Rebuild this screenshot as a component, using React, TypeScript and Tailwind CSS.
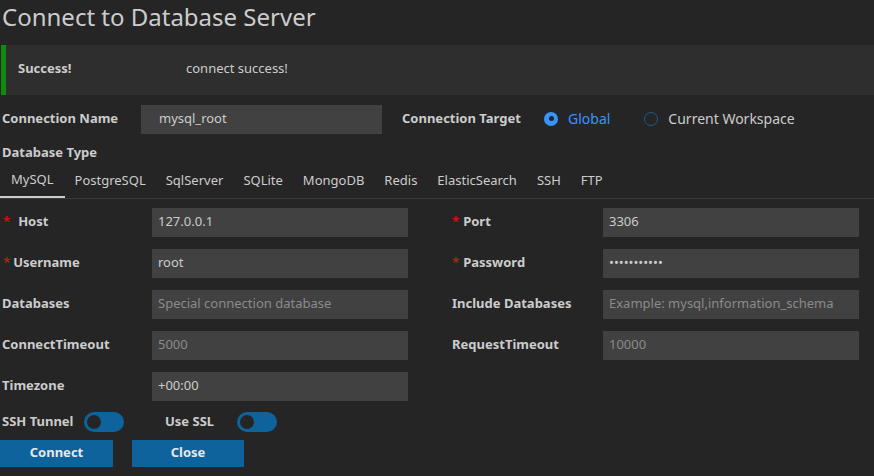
import React from 'react'

const tabs = ['MySQL', 'PostgreSQL', 'SqlServer', 'SQLite', 'MongoDB', 'Redis', 'ElasticSearch', 'SSH', 'FTP']

function Label({ text, required, gap = 'ml-[8px]' }: { text: string; required?: boolean; gap?: string }) {
  return (
    <span className="block pb-[1px] font-bold text-[13px] text-[#cccccc] whitespace-nowrap">
      {required && <span className="text-[#e51400] font-normal">*</span>}
      <span className={required ? gap : ''}>{text}</span>
    </span>
  )
}

function Field({ value, placeholder }: { value?: string; placeholder?: boolean }) {
  return (
    <div
      className={
        'h-[29px] w-[256px] bg-[#414141] px-[6px] pb-[2px] flex items-center text-[13px] ' +
        (placeholder ? 'text-[#8b8b8b]' : 'text-[#cccccc]')
      }
    >
      {value}
    </div>
  )
}

function Toggle() {
  return (
    <div className="w-[40px] h-[20px] rounded-full bg-[#0e639c] flex items-center px-[3px]">
      <div className="w-[14px] h-[14px] rounded-full bg-[#252526]" />
    </div>
  )
}

export default function App() {
  return (
    <div
      className="w-[874px] h-[476px] bg-[#252526] text-[#cccccc] overflow-hidden"
      style={{ fontFamily: '"Noto Sans", "Open Sans", sans-serif' }}
    >
      <h1 className="text-[24px] leading-[33px] pl-[2px] text-[#cccccc]">Connect to Database Server</h1>

      {/* alert */}
      <div className="mt-[12px] h-[50px] bg-[#2e2e2e] border-l-[5px] border-[#108b10] ml-[1px] flex items-center text-[13px] pb-[2px]">
        <span className="font-bold w-[180px] pl-[12px]">Success!</span>
        <span>connect success!</span>
      </div>

      {/* connection name / target */}
      <div className="mt-[10px] flex items-center h-[29px]">
        <div className="w-[141px] pl-[2px]">
          <Label text="Connection Name" />
        </div>
        <div className="h-[29px] w-[241px] bg-[#414141] pl-[18px] pb-[2px] flex items-center text-[13px]">mysql_root</div>
        <div className="ml-[20px] w-[142px]">
          <Label text="Connection Target" />
        </div>
        <div className="flex items-center gap-[10px] text-[14px] text-[#3794ff] pb-[2px]">
          <span className="w-[14px] h-[14px] rounded-full bg-[#3794ff] flex items-center justify-center">
            <span className="w-[5px] h-[5px] rounded-full bg-[#252526]" />
          </span>
          Global
        </div>
        <div className="ml-[34px] flex items-center gap-[10px] text-[14px] pb-[2px]">
          <span className="w-[14px] h-[14px] rounded-full border border-[#1d5a8a]" />
          Current Workspace
        </div>
      </div>

      <div className="mt-[10px] pl-[2px] h-[18px] flex items-center">
        <Label text="Database Type" />
      </div>

      {/* tabs */}
      <div className="mt-[4px] flex border-b border-[#3b3b3b] text-[13px]">
        {tabs.map((t, i) => (
          <div
            key={t}
            className={
              'h-[32px] flex items-center px-[10px] pb-[3px] ' +
              (i === 0 ? 'border-b-2 border-[#cccccc] -mb-[1px] pl-[11px] pr-[11px]' : '')
            }
          >
            {t}
          </div>
        ))}
      </div>

      {/* form */}
      <div className="mt-[9px] grid grid-cols-[152px_256px_44px_151px_256px] gap-y-[12px] items-center">
        <div className="pl-[3px]"><Label text="Host" required gap="ml-[8px]" /></div>
        <Field value="127.0.0.1" />
        <div />
        <div><Label text="Port" required gap="ml-[4px]" /></div>
        <Field value="3306" />

        <div className="pl-[3px]"><Label text="Username" required gap="ml-[3px]" /></div>
        <Field value="root" />
        <div />
        <div><Label text="Password" required gap="ml-[4px]" /></div>
        <Field value="•••••••••••" />

        <div className="pl-[2px]"><Label text="Databases" /></div>
        <Field value="Special connection database" placeholder />
        <div />
        <div><Label text="Include Databases" /></div>
        <Field value="Example: mysql,information_schema" placeholder />

        <div className="pl-[2px]"><Label text="ConnectTimeout" /></div>
        <Field value="5000" placeholder />
        <div />
        <div><Label text="RequestTimeout" /></div>
        <Field value="10000" placeholder />

        <div className="pl-[2px]"><Label text="Timezone" /></div>
        <Field value="+00:00" />
      </div>

      {/* toggles */}
      <div className="mt-[11px] flex items-center h-[20px]">
        <div className="pl-[2px] w-[84px]"><Label text="SSH Tunnel" /></div>
        <Toggle />
        <div className="ml-[41px] w-[72px]"><Label text="Use SSL" /></div>
        <Toggle />
      </div>

      {/* buttons */}
      <div className="mt-[8px] flex gap-[19px]">
        <button className="w-[113px] h-[27px] pb-[1px] bg-[#0e639c] text-[13px] font-bold text-[#e8e8e8]">Connect</button>
        <button className="w-[112px] h-[27px] pb-[1px] bg-[#0e639c] text-[13px] font-bold text-[#e8e8e8]">Close</button>
      </div>
    </div>
  )
}
